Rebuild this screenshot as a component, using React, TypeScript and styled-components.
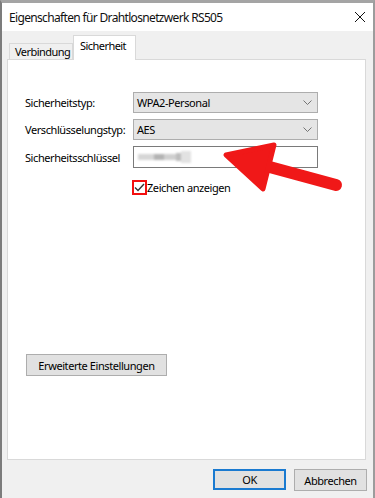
import React from "react";
import styled, { createGlobalStyle } from "styled-components";

const GlobalStyle = createGlobalStyle`
  html, body {
    margin: 0;
    padding: 0;
    width: 375px;
    height: 498px;
    overflow: hidden;
    background: #f0f0f0;
  }
  * { box-sizing: border-box; }
`;

const FONT = `"Noto Sans", "Open Sans", "Liberation Sans", sans-serif`;

const Root = styled.div`
  position: relative;
  width: 375px;
  height: 498px;
  font-family: ${FONT};
  font-size: 11px;
  letter-spacing: -0.42px;
  color: #000;
`;

const Window = styled.div`
  display: flex;
  flex-direction: column;
  width: 375px;
  height: 498px;
  background: #f0f0f0;
  border-top: 3px solid #a4a4a4;
  border-left: 2px solid #7c7c7c;
  border-right: 2px solid #9c9c9c;
`;

const TitleBar = styled.div`
  display: flex;
  align-items: center;
  justify-content: space-between;
  height: 28px;
  flex: none;
  background: #fff;
  padding: 0 8px 0 7px;
`;

const Title = styled.span`
  font-size: 12px;
  letter-spacing: -0.66px;
  color: #111;
`;

const CloseIcon = styled.svg`
  width: 10px;
  height: 10px;
  display: block;
`;

const Body = styled.div`
  flex: 1;
  display: flex;
  flex-direction: column;
  padding: 4px 7px 0 5px;
`;

const TabStrip = styled.div`
  display: flex;
  align-items: flex-end;
  height: 24px;
  padding-left: 2px;
  position: relative;
  z-index: 1;
`;

const Tab = styled.div<{ $active?: boolean; $w: number }>`
  width: ${(p) => p.$w}px;
  height: ${(p) => (p.$active ? 25 : 16)}px;
  margin-bottom: ${(p) => (p.$active ? -1 : 0)}px;
  background: ${(p) => (p.$active ? "#fff" : "#f0f0f0")};
  border: 1px solid #d9d9d9;
  border-bottom: none;
  display: flex;
  align-items: ${(p) => (p.$active ? "flex-start" : "center")};
  padding: ${(p) => (p.$active ? "3px 0 0 6px" : "1px 0 0 5px")};
  line-height: 14px;
  letter-spacing: -0.55px;
  white-space: nowrap;
  overflow: hidden;
`;

const Panel = styled.div`
  height: 401px;
  flex: none;
  background: #fff;
  border: 1px solid #d9d9d9;
  padding: 32px 0 0 17px;
  display: flex;
  flex-direction: column;
  align-items: flex-start;
`;

const FieldGrid = styled.div`
  display: grid;
  grid-template-columns: 108px 185px;
  row-gap: 6px;
  align-items: center;
`;

const Label = styled.span`
  white-space: nowrap;
`;

const Combo = styled.div`
  height: 21px;
  background: #e5e5e5;
  border: 1px solid #adadad;
  display: flex;
  align-items: center;
  justify-content: space-between;
  padding: 0 5px 0 3px;
`;

const Chevron = styled.svg`
  width: 9px;
  height: 5px;
  display: block;
`;

const TextBox = styled.div`
  height: 22px;
  background: #fff;
  border: 1px solid #7a7a7a;
  display: flex;
  align-items: center;
  padding-left: 4px;
`;

const Blur = styled.div`
  display: flex;
  align-items: center;
  filter: blur(1px);
`;

const BlurChunk = styled.span<{ $w: number; $h: number; $c: string }>`
  display: block;
  width: ${(p) => p.$w}px;
  height: ${(p) => p.$h}px;
  background: ${(p) => p.$c};
`;

const CheckRow = styled.label`
  grid-column: 2;
  display: flex;
  align-items: center;
  margin-top: 6px;
  margin-left: -1px;
`;

const CheckBox = styled.span`
  width: 15px;
  height: 15px;
  border: 2px solid #f30f0f;
  background: #fff;
  display: flex;
  align-items: center;
  justify-content: center;
  flex: none;
`;

const CheckMark = styled.svg`
  width: 11px;
  height: 9px;
  display: block;
`;

const Button = styled.div<{ $default?: boolean; $w: number }>`
  width: ${(p) => p.$w}px;
  height: ${(p) => (p.$default ? 21 : 22)}px;
  background: #e1e1e1;
  border: ${(p) => (p.$default ? "2px solid #1a7ad0" : "1px solid #adadad")};
  display: flex;
  align-items: center;
  justify-content: center;
  white-space: nowrap;
`;

const AdvancedButton = styled(Button)`
  margin-top: 159px;
  margin-left: 1px;
`;

const Footer = styled.div`
  display: flex;
  justify-content: flex-end;
  gap: 8px;
  margin-top: 9px;
  margin-right: -1px;
`;

const Overlay = styled.svg`
  position: absolute;
  left: 0;
  top: 0;
  width: 375px;
  height: 498px;
  pointer-events: none;
`;

const ComboBox = ({ value }: { value: string }) => (
  <Combo>
    <span>{value}</span>
    <Chevron viewBox="0 0 9 5">
      <path d="M0.5 0.5 L4.5 4.5 L8.5 0.5" fill="none" stroke="#666" strokeWidth="0.9" />
    </Chevron>
  </Combo>
);

export default function App() {
  return (
    <Root>
      <GlobalStyle />
      <Window>
        <TitleBar>
          <Title>Eigenschaften für Drahtlosnetzwerk RS505</Title>
          <CloseIcon viewBox="0 0 10 10">
            <path d="M0 0 L10 10 M10 0 L0 10" stroke="#111" strokeWidth="1" />
          </CloseIcon>
        </TitleBar>
        <Body>
          <TabStrip>
            <Tab $w={64}>Verbindung</Tab>
            <Tab $w={63} $active>
              Sicherheit
            </Tab>
          </TabStrip>
          <Panel>
            <FieldGrid>
              <Label>Sicherheitstyp:</Label>
              <ComboBox value="WPA2-Personal" />
              <Label>Verschlüsselungstyp:</Label>
              <ComboBox value="AES" />
              <Label>Sicherheitsschlüssel</Label>
              <TextBox>
                <Blur>
                  <BlurChunk $w={16} $h={6} $c="#d6d6d6" />
                  <BlurChunk $w={10} $h={6} $c="#b3b3b3" />
                  <BlurChunk $w={12} $h={6} $c="#cfcfcf" />
                  <BlurChunk $w={5} $h={8} $c="#bdbdbd" />
                  <BlurChunk $w={10} $h={12} $c="#e2e2e2" />
                </Blur>
              </TextBox>
              <CheckRow>
                <CheckBox>
                  <CheckMark viewBox="0 0 11 9">
                    <path d="M1 4.5 L4 7.5 L10 1" fill="none" stroke="#333" strokeWidth="1.4" />
                  </CheckMark>
                </CheckBox>
                <span>Zeichen anzeigen</span>
              </CheckRow>
            </FieldGrid>
            <AdvancedButton $w={141}>Erweiterte Einstellungen</AdvancedButton>
          </Panel>
          <Footer>
            <Button $w={73} $default>
              OK
            </Button>
            <Button $w={73}>Abbrechen</Button>
          </Footer>
        </Body>
      </Window>
      <Overlay viewBox="0 0 375 498">
        <line x1="266" y1="166" x2="336" y2="185" stroke="#f01818" strokeWidth="12" strokeLinecap="round" />
        <polygon
          points="226,155 274,145 263,189"
          fill="#f01818"
          stroke="#f01818"
          strokeWidth="5"
          strokeLinejoin="round"
        />
      </Overlay>
    </Root>
  );
}
